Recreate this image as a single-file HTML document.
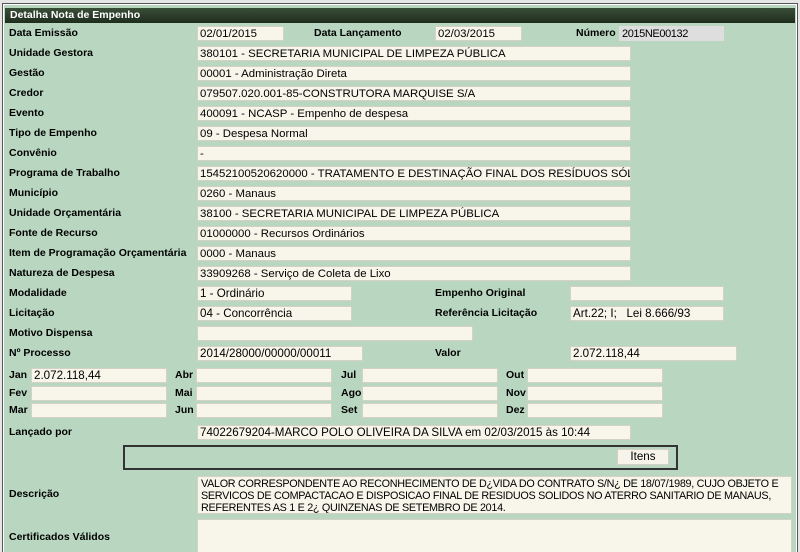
<!DOCTYPE html>
<html><head><meta charset="utf-8"><style>
html,body{margin:0;width:800px;height:552px;overflow:hidden}
body{background:#e6e6e6;font-family:"Liberation Sans",Tahoma,sans-serif;font-size:10.5px;color:#000;position:relative}
#f{position:absolute;left:2px;top:3px;width:794px;height:560px;border:1px solid #555;background:#b9d7c0;box-shadow:inset 0 0 0 1px #fff}
#h{position:absolute;width:790px;height:15px;background:linear-gradient(#3a4f38,#1f2d1e);color:#fff;font-weight:bold;font-size:10.5px;line-height:15px;padding-left:5px;box-sizing:border-box}
.l{position:absolute;font-weight:bold;white-space:nowrap;line-height:14px}
.i{position:absolute;background:#f8f6ea;border:1px solid #d4d2c4;height:15px;box-sizing:border-box;line-height:14px;padding-left:2px;white-space:nowrap;overflow:hidden;font-size:11.4px;letter-spacing:0}
.c .i{font-size:11.6px;letter-spacing:0}
</style></head><body><div id="f"></div><div id="h" style="left:5px;top:8px">Detalha Nota de Empenho</div>
<div class="l" style="left:9px;top:26px">Data Emissão</div><div class="i" style="left:197px;top:26px;width:87px">02/01/2015</div>
<div class="l" style="left:314px;top:26px">Data Lançamento</div><div class="i" style="left:435px;top:26px;width:87px">02/03/2015</div>
<div class="l" style="left:576px;top:26px">Número</div><div class="i" style="left:619px;top:26px;width:105px;background:#dedede;border-color:#dedede;letter-spacing:-0.4px;font-size:11px">2015NE00132</div>
<div class="l" style="left:9px;top:46px">Unidade Gestora</div><div class="i" style="left:197px;top:46px;width:434px">380101 - SECRETARIA MUNICIPAL DE LIMPEZA PÚBLICA</div>
<div class="l" style="left:9px;top:66px">Gestão</div><div class="i" style="left:197px;top:66px;width:434px">00001 - Administração Direta</div>
<div class="l" style="left:9px;top:86px">Credor</div><div class="i" style="left:197px;top:86px;width:434px">079507.020.001-85-CONSTRUTORA MARQUISE S/A</div>
<div class="l" style="left:9px;top:106px">Evento</div><div class="i" style="left:197px;top:106px;width:434px">400091 - NCASP - Empenho de despesa</div>
<div class="l" style="left:9px;top:126px">Tipo de Empenho</div><div class="i" style="left:197px;top:126px;width:434px">09 - Despesa Normal</div>
<div class="l" style="left:9px;top:146px">Convênio</div><div class="i" style="left:197px;top:146px;width:434px">-</div>
<div class="l" style="left:9px;top:166px">Programa de Trabalho</div><div class="i" style="left:197px;top:166px;width:434px">15452100520620000 - TRATAMENTO E DESTINAÇÃO FINAL DOS RESÍDUOS SÓLIDOS NO</div>
<div class="l" style="left:9px;top:186px">Município</div><div class="i" style="left:197px;top:186px;width:434px">0260 - Manaus</div>
<div class="l" style="left:9px;top:206px">Unidade Orçamentária</div><div class="i" style="left:197px;top:206px;width:434px">38100 - SECRETARIA MUNICIPAL DE LIMPEZA PÚBLICA</div>
<div class="l" style="left:9px;top:226px">Fonte de Recurso</div><div class="i" style="left:197px;top:226px;width:434px">01000000 - Recursos Ordinários</div>
<div class="l" style="left:9px;top:246px">Item de Programação Orçamentária</div><div class="i" style="left:197px;top:246px;width:434px">0000 - Manaus</div>
<div class="l" style="left:9px;top:266px">Natureza de Despesa</div><div class="i" style="left:197px;top:266px;width:434px">33909268 - Serviço de Coleta de Lixo</div>
<div class="c">
<div class="l" style="left:9px;top:286px">Modalidade</div><div class="i" style="left:197px;top:286px;width:155px">1 - Ordinário</div>
<div class="l" style="left:435px;top:286px">Empenho Original</div><div class="i" style="left:570px;top:286px;width:154px"></div>
<div class="l" style="left:9px;top:306px">Licitação</div><div class="i" style="left:197px;top:306px;width:155px">04 - Concorrência</div>
<div class="l" style="left:435px;top:306px">Referência Licitação</div><div class="i" style="left:570px;top:306px;width:154px">Art.22; I;&nbsp;&nbsp; Lei 8.666/93</div>
<div class="l" style="left:9px;top:326px">Motivo Dispensa</div><div class="i" style="left:197px;top:326px;width:276px"></div>
<div class="l" style="left:9px;top:346px">Nº Processo</div><div class="i" style="left:197px;top:346px;width:166px">2014/28000/00000/00011</div>
<div class="l" style="left:435px;top:346px">Valor</div><div class="i" style="left:570px;top:346px;width:167px">2.072.118,44</div>
<div class="l" style="left:9px;top:368px">Jan</div><div class="i" style="left:31px;top:368px;width:136px">2.072.118,44</div>
<div class="l" style="left:175px;top:368px">Abr</div><div class="i" style="left:196px;top:368px;width:136px"></div>
<div class="l" style="left:341px;top:368px">Jul</div><div class="i" style="left:362px;top:368px;width:136px"></div>
<div class="l" style="left:506px;top:368px">Out</div><div class="i" style="left:527px;top:368px;width:136px"></div>
<div class="l" style="left:9px;top:386px">Fev</div><div class="i" style="left:31px;top:386px;width:136px"></div>
<div class="l" style="left:175px;top:386px">Mai</div><div class="i" style="left:196px;top:386px;width:136px"></div>
<div class="l" style="left:341px;top:386px">Ago</div><div class="i" style="left:362px;top:386px;width:136px"></div>
<div class="l" style="left:506px;top:386px">Nov</div><div class="i" style="left:527px;top:386px;width:136px"></div>
<div class="l" style="left:9px;top:403px">Mar</div><div class="i" style="left:31px;top:403px;width:136px"></div>
<div class="l" style="left:175px;top:403px">Jun</div><div class="i" style="left:196px;top:403px;width:136px"></div>
<div class="l" style="left:341px;top:403px">Set</div><div class="i" style="left:362px;top:403px;width:136px"></div>
<div class="l" style="left:506px;top:403px">Dez</div><div class="i" style="left:527px;top:403px;width:136px"></div>
<div class="l" style="left:9px;top:425px">Lançado por</div><div class="i" style="left:197px;top:425px;width:434px">74022679204-MARCO POLO OLIVEIRA DA SILVA em 02/03/2015 às 10:44</div>
<div style="position:absolute;left:123px;top:445px;width:555px;height:25px;border:2px solid #333;box-sizing:border-box"></div>
<div class="i" style="left:617px;top:449px;width:52px;height:16px;text-align:center;padding:0;line-height:14px;background:#f5f3ea">Itens</div>
<div class="l" style="left:9px;top:487px">Descrição</div><div class="i" style="left:197px;top:476px;width:595px;height:38px;line-height:12px;padding:1px 3px;font-size:10.8px;letter-spacing:-0.3px">VALOR CORRESPONDENTE AO RECONHECIMENTO DE D¿VIDA DO CONTRATO S/N¿ DE 18/07/1989, CUJO OBJETO E<br>SERVICOS DE COMPACTACAO E DISPOSICAO FINAL DE RESIDUOS SOLIDOS NO ATERRO SANITARIO DE MANAUS,<br>REFERENTES AS 1 E 2¿ QUINZENAS DE SETEMBRO DE 2014.</div>
<div class="l" style="left:9px;top:530px">Certificados Válidos</div><div class="i" style="left:197px;top:519px;width:595px;height:40px"></div>
</div>
</body></html>
